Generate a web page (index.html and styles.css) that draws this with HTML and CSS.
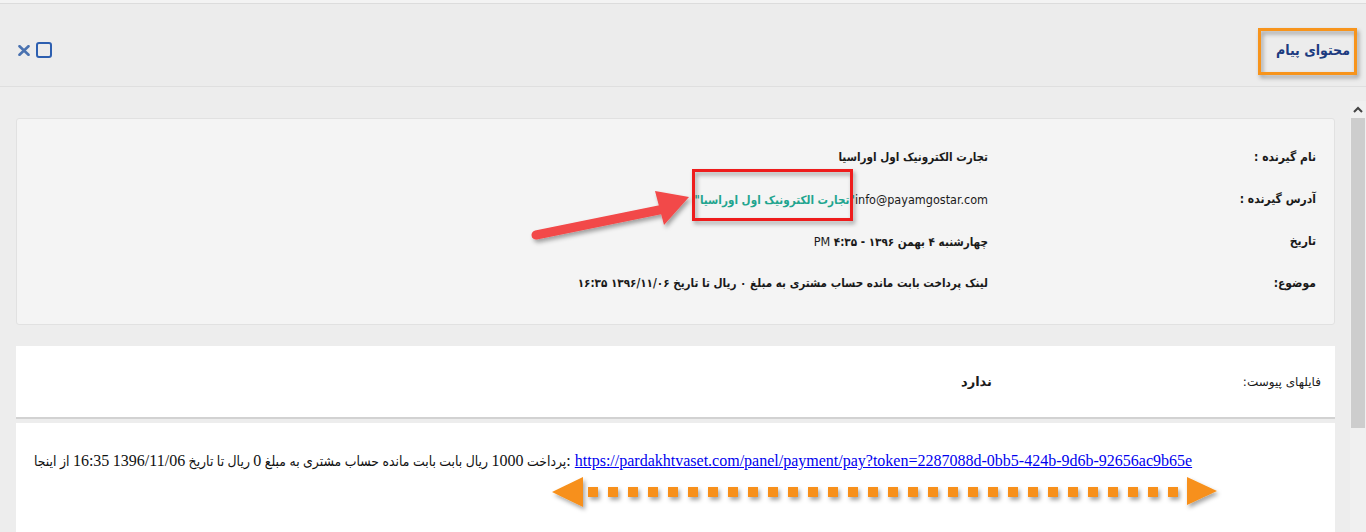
FILE: index.html
```html
<!DOCTYPE html>
<html lang="fa" dir="rtl">
<head>
<meta charset="utf-8">
<title>محتوای پیام</title>
<link rel="stylesheet" href="styles.css">
</head>
<body>
<div class="topstrip"></div>
<header class="header">
  <h1 class="title">محتوای پیام</h1>
  <div class="controls">
    <span class="btn-max"></span>
    <svg class="btn-close" width="12" height="11" viewBox="0 0 12 11"><path d="M1.5 1.2 L10.5 9.8 M10.5 1.2 L1.5 9.8" stroke="#4a72b0" stroke-width="2.6" stroke-linecap="round"/></svg>
  </div>
</header>
<div class="main">
  <div class="scrollbar">
    <div class="sb-up"><svg width="10" height="7" viewBox="0 0 10 7"><path d="M1 6 L5 2 L9 6" fill="none" stroke="#444" stroke-width="2"/></svg></div>
    <div class="sb-thumb"></div>
    <div class="sb-track"></div>
  </div>
  <div class="content">
    <section class="info">
      <div class="row"><div class="label">نام گیرنده :</div><div class="value">تجارت الکترونیک اول اوراسیا</div></div>
      <div class="row"><div class="label">آدرس گیرنده :</div><div class="value"><span class="latin">info@payamgostar.com</span><span class="green">"تجارت الکترونیک اول اوراسیا"</span></div></div>
      <div class="row"><div class="label">تاریخ</div><div class="value">چهارشنبه ۴ بهمن ۱۳۹۶ - ۴:۳۵ <span class="latin">PM</span></div></div>
      <div class="row"><div class="label">موضوع:</div><div class="value">لینک پرداخت بابت مانده حساب مشتری به مبلغ ۰ ریال تا تاریخ ۱۳۹۶/۱۱/۰۶ ۱۶:۳۵</div></div>
    </section>
    <section class="attach">
      <div class="label attach-label">فایلهای پیوست:</div>
      <div class="attach-value">ندارد</div>
    </section>
    <section class="message">
      <p class="msg" dir="ltr"><span class="fa">پرداخت <span class="num">1000</span> ریال بابت بابت مانده حساب مشتری به مبلغ <span class="num">0</span> ریال تا تاریخ <span class="num">1396/11/06</span> <span class="num">16:35</span> از اینجا</span>: <a href="#">https://pardakhtvaset.com/panel/payment/pay?token=2287088d-0bb5-424b-9d6b-92656ac9b65e</a></p>
    </section>
  </div>
</div>
<svg class="annotations" width="1366" height="532" viewBox="0 0 1366 532">
  <defs>
    <filter id="sh" x="-20%" y="-50%" width="140%" height="200%">
      <feDropShadow dx="2" dy="3" stdDeviation="2" flood-color="#000" flood-opacity="0.35"/>
    </filter>
  </defs>
  <rect x="1259.5" y="29.5" width="96" height="44" fill="none" stroke="#f7941d" stroke-width="3" filter="url(#sh)"/>
  <rect x="693.5" y="170.5" width="158" height="49" fill="none" stroke="#ee1c1c" stroke-width="3" filter="url(#sh)"/>
  <g filter="url(#sh)" fill="#f24848">
    <path d="M536 235 L664 209" stroke="#f24848" stroke-width="9" stroke-linecap="round"/>
    <polygon points="689,197 655,191 664,225"/>
  </g>
  <g filter="url(#sh)" fill="#f7901a" id="dots">
    <polygon points="552,492 583,477 583,507"/>
    <polygon points="1217,491 1187,477 1187,505"/>
  </g>
</svg>
<script>
(function(){var g=document.getElementById('dots');for(var i=0;i<30;i++){var r=document.createElementNS('http://www.w3.org/2000/svg','rect');r.setAttribute('x',588+20*i);r.setAttribute('y',487);r.setAttribute('width',10);r.setAttribute('height',10);g.appendChild(r);}})();
</script>
</body>
</html>
```

FILE: styles.css
```css
* { box-sizing: border-box; }
html, body { margin: 0; padding: 0; }
body {
  width: 1366px;
  height: 532px;
  overflow: hidden;
  position: relative;
  background: #ededed;
  font-family: "DejaVu Sans Condensed", "DejaVu Sans", sans-serif;
  color: #1a1a1a;
}
.topstrip {
  height: 4px;
  background: #f3f3f3;
  border-bottom: 1px solid #dcdcdc;
}
.header {
  height: 83px;
  background: #ececec;
  border-bottom: 1px solid #dfdfdf;
  display: flex;
  align-items: center;
  justify-content: space-between;
  padding: 10px 16px 0 18px;
}
.title {
  margin: 0;
  font-family: "DejaVu Sans Condensed", "DejaVu Sans", sans-serif;
  font-size: 14px;
  font-weight: bold;
  color: #1c3b80;
}
.controls {
  display: flex;
  align-items: center;
  gap: 6px;
}
.btn-max {
  width: 16px;
  height: 16px;
  border: 2px solid #2d5fb0;
  border-radius: 3px;
}
.btn-close { display: block; }
.main {
  display: flex;
  height: 445px;
}
.scrollbar {
  width: 16px;
  margin-top: 14px;
  display: flex;
  flex-direction: column;
  background: #f0f0f0;
}
.sb-up {
  height: 17px;
  display: flex;
  align-items: center;
  justify-content: center;
}
.sb-thumb {
  height: 310px;
  background: #cdcdcd;
  margin: 0 1px;
}
.sb-track { flex: 1; }
.content {
  flex: 1;
  padding: 31px 15px 0 16px;
  display: flex;
  flex-direction: column;
}
.info {
  background: #f4f4f4;
  border: 1px solid #e1e1e1;
  border-radius: 3px;
  padding: 17px 0 20px;
}
.row {
  display: flex;
  align-items: center;
  height: 42px;
}
.label {
  width: 346px;
  padding-right: 18px;
  font-family: "DejaVu Sans Condensed", "DejaVu Sans", sans-serif;
  font-size: 12px;
  font-weight: bold;
  color: #1a1a1a;
}
.value {
  font-family: "DejaVu Sans Condensed", "DejaVu Sans", sans-serif;
  font-size: 11.6px;
  font-weight: bold;
  color: #1a1a1a;
}
.latin {
  font-family: "DejaVu Sans Condensed", "DejaVu Sans", sans-serif;
  font-weight: normal;
  font-size: 12.5px;
}
.green { color: #1fa58f; }
.attach {
  margin-top: 21px;
  background: #fff;
  border-bottom: 2px solid #d2d2d2;
  height: 73px;
  display: flex;
  align-items: center;
}
.attach-label {
  width: 343px;
  padding-right: 14px;
  font-family: "DejaVu Sans", sans-serif;
  font-weight: normal;
}
.attach-value {
  font-family: "DejaVu Sans", sans-serif;
  font-size: 13px;
  font-weight: 600;
  color: #1a1a1a;
}
.message {
  margin-top: 4px;
  background: #fff;
  flex: 1;
  padding: 28px 18px 0;
}
.msg {
  margin: 0;
  text-align: left;
  font-family: "Liberation Serif", "DejaVu Serif", serif;
  font-size: 16px;
  line-height: 20px;
  color: #111;
}
.fa {
  font-family: "Liberation Serif", "DejaVu Sans Condensed", serif;
  font-size: 13.85px;
}
.num { font-size: 16px; }
.msg a { color: #0000ee; }
.annotations {
  position: absolute;
  left: 0;
  top: 0;
  pointer-events: none;
}
```
